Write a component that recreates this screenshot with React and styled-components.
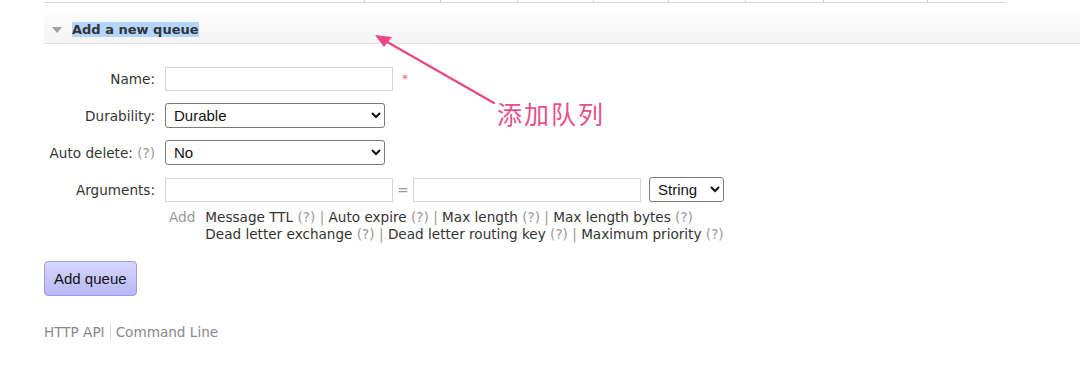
import styled, { createGlobalStyle } from 'styled-components';

const GlobalStyle = createGlobalStyle`
  html, body {
    margin: 0;
    padding: 0;
    background: #fff;
  }
  body {
    font-family: Verdana, "DejaVu Sans", sans-serif;
    font-size: 13.6px;
    color: #484848;
  }
`;

const columns = [321, 76, 77, 76, 75, 77, 78, 104, 77];

const hints = [
  ['Message TTL', 'Auto expire', 'Max length', 'Max length bytes'],
  ['Dead letter exchange', 'Dead letter routing key', 'Maximum priority'],
];

const App = () => (
  <Page>
    <GlobalStyle />
    <TableEdge>
      {columns.map((w, i) => (
        <EdgeCell key={i} style={{ width: w }} />
      ))}
    </TableEdge>

    <SectionHeader>
      <Caret />
      <SectionTitle>Add a new queue</SectionTitle>
    </SectionHeader>

    <Form>
      <Label>Name:</Label>
      <Field>
        <TextInput />
        <Required>*</Required>
      </Field>

      <Label>Durability:</Label>
      <Field>
        <Select defaultValue="Durable" $width={220}>
          <option>Durable</option>
          <option>Transient</option>
        </Select>
      </Field>

      <Label>
        Auto delete: <Help>(?)</Help>
      </Label>
      <Field>
        <Select defaultValue="No" $width={220}>
          <option>No</option>
          <option>Yes</option>
        </Select>
      </Field>

      <Label>Arguments:</Label>
      <Field>
        <TextInput />
        <Equals>=</Equals>
        <TextInput />
        <Select defaultValue="String" $width={75} $gap={8}>
          <option>String</option>
          <option>Number</option>
          <option>Boolean</option>
        </Select>
      </Field>

      <span />
      <HintBlock>
        <AddWord>Add</AddWord>
        <HintLines>
          {hints.map((line, i) => (
            <div key={i}>
              {line.map((h, j) => (
                <span key={h}>
                  {j > 0 && <Help> | </Help>}
                  {h} <Help>(?)</Help>
                </span>
              ))}
            </div>
          ))}
        </HintLines>
      </HintBlock>
    </Form>

    <SubmitButton>Add queue</SubmitButton>

    <Footer>
      <FooterLink>HTTP API</FooterLink>
      <FooterLink $divided>Command Line</FooterLink>
    </Footer>

    <Annotation>
      <svg width="140" height="80" viewBox="0 0 140 80">
        <line x1="124" y1="76" x2="12" y2="12" stroke="#e84a85" strokeWidth="2.4" strokeLinecap="round" />
        <path d="M5 8 L22 10 L14 20 Z" fill="#e84a85" />
      </svg>
    </Annotation>
    <AnnotationText>添加队列</AnnotationText>
  </Page>
);

const Page = styled.div`
  position: relative;
  width: 1080px;
  height: 367px;
  overflow: hidden;
`;

const TableEdge = styled.div`
  display: flex;
  margin-left: 44px;
  width: 961px;
  height: 2px;
  border-bottom: 1px solid #d4d4d4;
`;

const EdgeCell = styled.div`
  border-right: 1px solid #d4d4d4;
  box-sizing: border-box;
  &:last-child {
    border-right: none;
  }
`;

const SectionHeader = styled.div`
  display: flex;
  align-items: center;
  margin: 12px 0 0 44px;
  height: 28px;
  padding-left: 8px;
  background: linear-gradient(#fbfbfb, #f4f4f4);
  border-bottom: 1px solid #e2e2e2;
`;

const Caret = styled.span`
  width: 0;
  height: 0;
  border-left: 5px solid transparent;
  border-right: 5px solid transparent;
  border-top: 6px solid #a0a0a0;
  margin-right: 10px;
  margin-top: 1px;
`;

const SectionTitle = styled.span`
  font-weight: bold;
  font-size: 13px;
  color: #333;
  background: #b4d5fe;
`;

const Form = styled.div`
  display: grid;
  grid-template-columns: 111px auto;
  column-gap: 10px;
  row-gap: 12px;
  margin: 23px 0 0 44px;
  align-items: center;
  justify-content: start;
`;

const Label = styled.label`
  text-align: right;
  white-space: nowrap;
  color: #333;
`;

const Help = styled.span`
  color: #999;
`;

const Field = styled.div`
  display: flex;
  align-items: center;
`;

const TextInput = styled.input`
  box-sizing: border-box;
  width: 228px;
  height: 24px;
  border: 1px solid #d6d6d6;
  padding: 2px 4px;
  font-size: 13px;
  margin: 0;
`;

const Required = styled.span`
  color: #e0687a;
  margin-left: 9px;
  font-size: 12px;
  align-self: flex-start;
  margin-top: 5px;
`;

const Equals = styled.span`
  color: #999;
  width: 20px;
  text-align: center;
`;

const Select = styled.select`
  box-sizing: border-box;
  width: ${(p) => p.$width}px;
  height: 25px;
  margin: 0 0 0 ${(p) => p.$gap || 0}px;
  font-family: "Liberation Sans", Arial, sans-serif;
  font-size: 15px;
  color: #111;
  border: 1px solid #7a7a7a;
  border-radius: 3px;
  background: #fff;
  padding: 0 4px;
`;

const HintBlock = styled.div`
  display: flex;
  gap: 10px;
  margin-top: -5px;
  line-height: 17px;
  padding-left: 4px;
`;

const AddWord = styled.span`
  color: #999;
`;

const HintLines = styled.div`
  color: #333;
  white-space: nowrap;
`;

const SubmitButton = styled.button`
  display: block;
  margin: 18px 0 0 44px;
  height: 35px;
  padding: 0 9px;
  border: 1px solid #9b9be6;
  border-radius: 4px;
  background: linear-gradient(#d6d6ff, #b8b8f8);
  font-family: "Liberation Sans", Arial, sans-serif;
  font-size: 15px;
  color: #111;
`;

const Footer = styled.div`
  display: flex;
  margin: 28px 0 0 44px;
  color: #888;
`;

const FooterLink = styled.span`
  padding: 0 ${(p) => (p.$divided ? 0 : 5)}px 0 ${(p) => (p.$divided ? 5 : 0)}px;
  border-left: ${(p) => (p.$divided ? '1px solid #ddd' : 'none')};
`;

const Annotation = styled.div`
  position: absolute;
  left: 370px;
  top: 27px;
  pointer-events: none;
`;

const AnnotationText = styled.div`
  position: absolute;
  left: 497px;
  top: 95px;
  font-family: "Noto Sans CJK SC", sans-serif;
  font-size: 25px;
  color: #e5508a;
  letter-spacing: 2px;
`;

export default App;
